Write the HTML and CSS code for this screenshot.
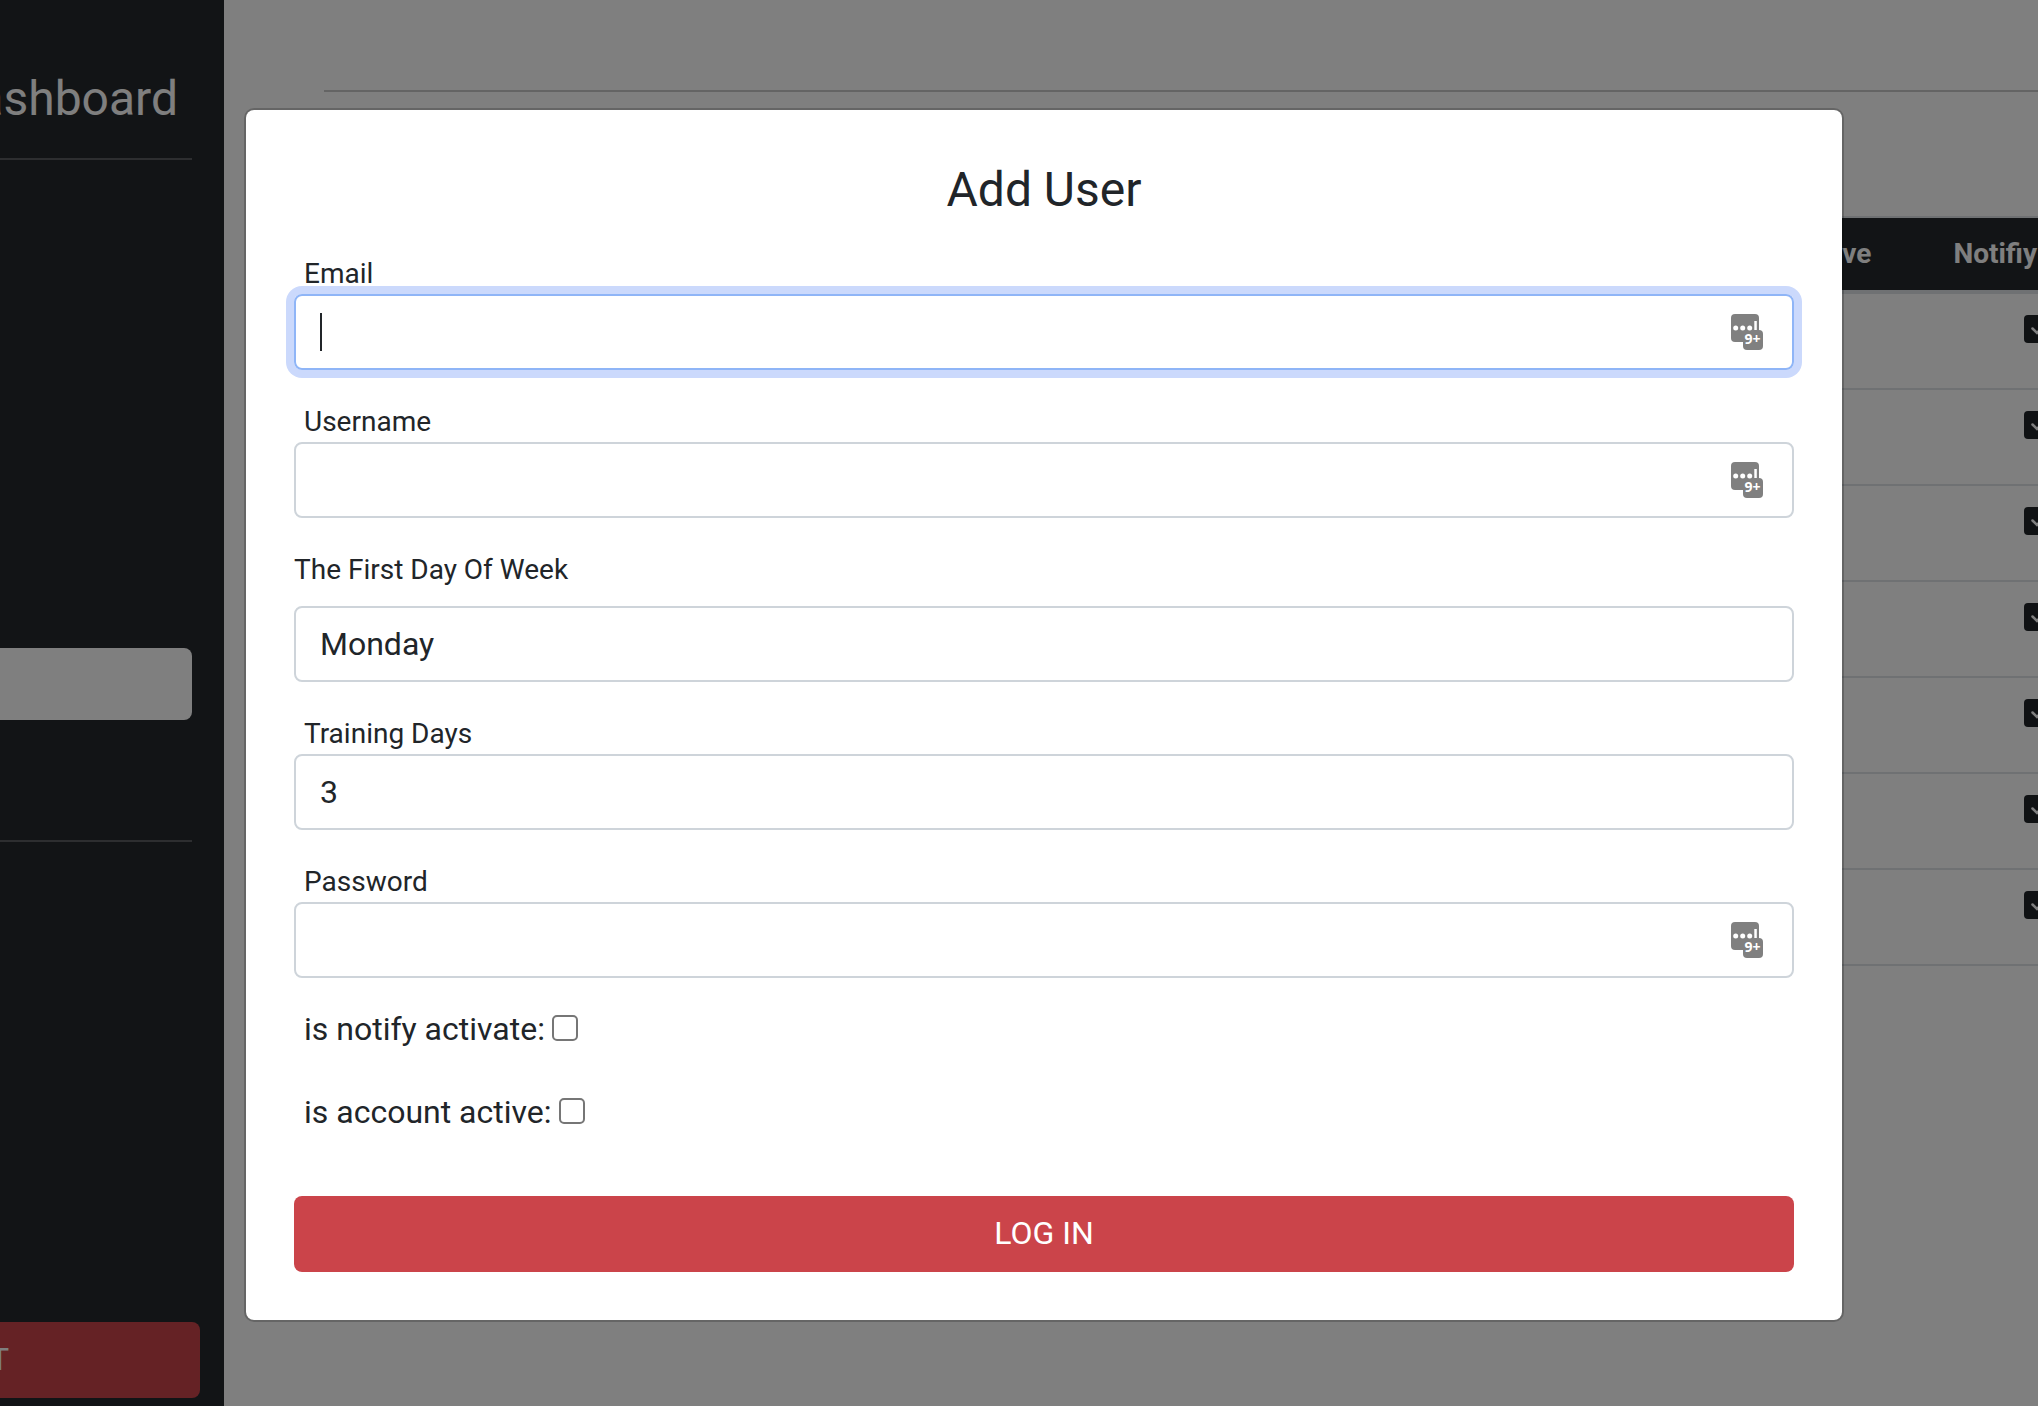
FILE: index.html
```html
<!DOCTYPE html>
<html lang="en">
<head>
<meta charset="utf-8">
<title>Dashboard</title>
<link rel="stylesheet" href="styles.css">
</head>
<body>
<svg class="defs" width="0" height="0">
  <symbol id="check" viewBox="0 0 28 28"><rect width="28" height="28" rx="4" fill="#212529"/><path d="M8.500 13.500l4.500 4.500 7.500-8" fill="none" stroke="#fff" stroke-width="2.500" stroke-linecap="round"/></symbol>
  <symbol id="vault" viewBox="0 0 32 36"><rect width="28" height="28" rx="4" fill="#808080"/><rect x="12" y="16" width="20" height="20" rx="4" fill="#808080"/><circle cx="4.700" cy="14" r="2.500" fill="#fff"/><circle cx="11.700" cy="14" r="2.500" fill="#fff"/><circle cx="18.700" cy="14" r="2.500" fill="#fff"/><path d="M23.300 7h2.500v9h-2.500z" fill="#fff"/><text x="13.600" y="30" class="vault-count">9+</text></symbol>
</svg>
<div class="page">
  <aside class="sidebar">
    <div class="brand">Dashboard</div>
    <hr class="side-rule">
    <nav class="nav"><div class="nav-active"></div></nav>
    <hr class="side-rule">
    <button class="logout">LOGOUT</button>
  </aside>
  <main class="main">
    <hr class="main-rule">
    <div class="thead"><span>Active</span><span>Notifiy</span></div>
    <div class="row"><svg><use href="#check"/></svg></div>
    <div class="row"><svg><use href="#check"/></svg></div>
    <div class="row"><svg><use href="#check"/></svg></div>
    <div class="row"><svg><use href="#check"/></svg></div>
    <div class="row"><svg><use href="#check"/></svg></div>
    <div class="row"><svg><use href="#check"/></svg></div>
    <div class="row"><svg><use href="#check"/></svg></div>
  </main>
</div>
<div class="backdrop">
  <form class="modal">
    <h1 class="title">Add User</h1>
    <label class="label">Email</label>
    <div class="field focused"><i class="caret"></i><svg><use href="#vault"/></svg></div>
    <label class="label">Username</label>
    <div class="field"><svg><use href="#vault"/></svg></div>
    <label class="label select-label">The First Day Of Week</label>
    <div class="field">Monday</div>
    <label class="label">Training Days</label>
    <div class="field">3</div>
    <label class="label">Password</label>
    <div class="field last"><svg><use href="#vault"/></svg></div>
    <label class="check-row">is notify activate:<span class="box"></span></label>
    <label class="check-row">is account active:<span class="box"></span></label>
    <button class="submit" type="button">LOG IN</button>
  </form>
</div>
</body>
</html>
```
FILE: styles.css
```css
* { box-sizing: border-box; }
body {
  margin: 0;
  height: 1406px;
  overflow: hidden;
  background: #fff;
  color: #212529;
  font: 32px/48px Roboto, sans-serif;
}
hr { border: 0; margin: 0; height: 2px; }
button { border: 0; border-radius: 8px; font: inherit; color: #fff; }
.defs { display: none; }
.page { display: flex; height: 1406px; overflow: hidden; }

.sidebar {
  width: 224px;
  flex: none;
  display: flex;
  flex-direction: column;
  padding: 63px 0 8px;
  background: #24282c;
  color: #fff;
}
.brand {
  display: flex;
  justify-content: flex-end;
  width: 178px;
  height: 72px;
  margin-bottom: 23px;
  font-size: 48px;
  line-height: 72px;
}
.side-rule { width: 192px; background: #5a5d61; }
.nav { height: 680px; padding-top: 488px; }
.nav-active { width: 192px; height: 72px; background: #fff; border-radius: 0 8px 8px 0; }
.logout {
  display: flex;
  justify-content: flex-end;
  align-items: center;
  width: 200px;
  height: 76px;
  margin-top: auto;
  padding: 0 191px 2px 0;
  border-radius: 0 8px 8px 0;
  background: #cb444a;
}

.main { flex: 1; padding: 90px 0 0 100px; }
.main-rule { background: #c8c8c8; margin-bottom: 124px; }
.thead {
  display: flex;
  justify-content: flex-end;
  gap: 82px;
  height: 78px;
  padding: 12px 1px 0 0;
  border-top: 2px solid #dee2e6;
  border-bottom: 4px solid #dee2e6;
  background: #24282c;
  color: #fff;
  font-size: 28px;
  font-weight: 700;
}
.row {
  display: flex;
  justify-content: flex-end;
  height: 96px;
  padding-top: 21px;
  border-bottom: 2px solid #dee2e6;
}
.row svg { width: 28px; height: 28px; margin-right: -14px; flex: none; }

.backdrop {
  position: absolute;
  inset: 0;
  padding: 108px 0 0 244px;
  background: rgba(0, 0, 0, .5);
}
.modal {
  display: flex;
  flex-direction: column;
  width: 1600px;
  height: 1214px;
  padding: 48px;
  border: 2px solid rgba(0, 0, 0, .2);
  border-radius: 10px;
  background: #fff;
  background-clip: padding-box;
}
.title { margin: 3px 0 33px; font-size: 48px; line-height: 58px; font-weight: 400; text-align: center; }
.label { height: 42px; padding-left: 10px; font-size: 28px; line-height: 43px; }
.select-label { height: 58px; padding-left: 0; }
.field {
  display: flex;
  align-items: center;
  flex: none;
  height: 76px;
  margin-bottom: 30px;
  padding: 0 29px 0 24px;
  border: 2px solid #ced4da;
  border-radius: 8px;
}
.field svg { width: 32px; height: 36px; margin-left: auto; }
.last { margin-bottom: 27px; }
.focused { border-color: #8fb5f7; box-shadow: 0 0 0 8px #cbd9fc; }
.caret { width: 2px; height: 38px; background: #212529; }
.vault-count { font: 700 14px "Open Sans", sans-serif; fill: #fff; }
.check-row { display: flex; align-items: center; height: 48px; margin-bottom: 35px; padding-left: 10px; }
.box { width: 26px; height: 26px; margin: -3px 0 0 7.5px; border: 2px solid #767676; border-radius: 5px; }
.submit { height: 76px; margin-top: auto; padding: 0 0 2px; background: #cb444a; }
```
